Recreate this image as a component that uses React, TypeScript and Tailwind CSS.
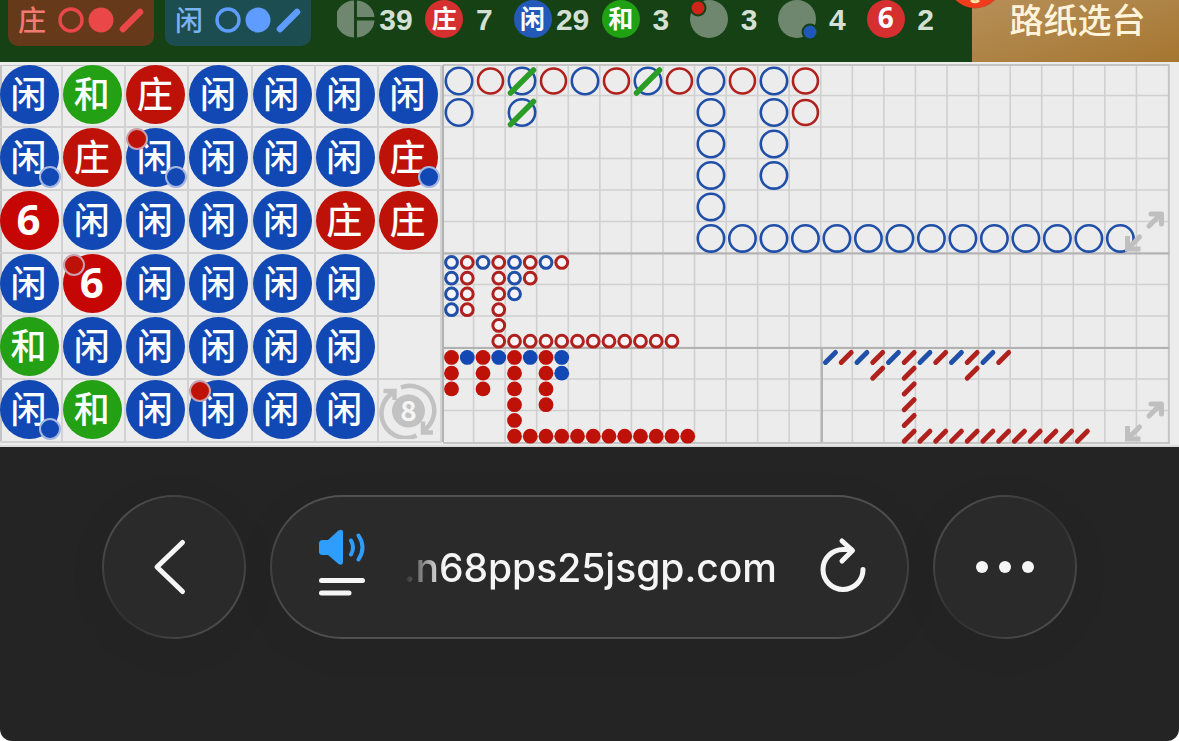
import type { ReactNode } from 'react';

const BLUE = '#1248b4';
const RED = '#be1108';
const LINE_BLUE = '#1f4fa8';
const LINE_RED = '#b0201c';

// B = 闲, R = 庄, T = 和, 6 = lucky six; "r" / "b" after it marks a pair dot
const beads = [
  ['B', 'T', 'R', 'B', 'B', 'B', 'B'],
  ['Bb', 'R', 'Brb', 'B', 'B', 'B', 'Rb'],
  ['6', 'B', 'B', 'B', 'B', 'R', 'R'],
  ['B', '6r', 'B', 'B', 'B', 'B', ''],
  ['T', 'B', 'B', 'B', 'B', 'B', ''],
  ['Bb', 'T', 'B', 'Br', 'B', 'B', '?'],
];

// G is a blue result crossed by a tie
const bigRoad = [
  'BRGRBRGRBRBR',
  'B.G.....B.BR',
  '........B.B',
  '........B.B',
  '........B',
  '........BBBBBBBBBBBBBB',
];

const bigEyeRoad = ['BRBRBRBR', 'BR.RBR', 'BR.RB', 'BR.R', '...R', '...RRRRRRRRRRRR'];

const smallRoad = ['RBRBRBRB', 'R.R.R.RB', 'R.R.R.R', '....R.R', '....R', '....RRRRRRRRRRRR'];

const cockroachRoad = ['BRBRBRBRBRBR', '...R.R...R', '.....R', '.....R', '.....R', '.....RRRRRRRRRRRR'];

const beadStyles: Record<string, { label: string; className: string }> = {
  B: { label: '闲', className: 'bg-[#1248b4] pb-1.5 text-[36px] font-medium' },
  R: { label: '庄', className: 'bg-[#be1108] pb-1.5 text-[36px] font-medium' },
  T: { label: '和', className: 'bg-[#23a014] pb-1.5 text-[36px] font-medium' },
  '6': { label: '6', className: 'bg-[#c60505] pb-1 text-[42px] font-bold font-["Open_Sans",sans-serif]' },
};

const Bead = ({ value }: { value: string }) => {
  const style = beadStyles[value[0]];
  return (
    <div
      className={`relative flex h-[59px] w-[59px] items-center justify-center rounded-full leading-none text-white ${style.className}`}
    >
      <span className="pr-0.5">{style.label}</span>
      {value.includes('r') && (
        <span className="absolute left-0 top-0 h-[22px] w-[22px] rounded-full border-2 border-[#c9a0ab] bg-[#be1108]" />
      )}
      {value.includes('b') && (
        <span className="absolute -bottom-px -right-0.5 h-[22px] w-[22px] rounded-full border-2 border-[#a5b6e2] bg-[#1248b4]" />
      )}
    </div>
  );
};

const NextRound = () => (
  <button type="button" aria-label="8" className="h-[59px] w-[59px]">
    <svg viewBox="0 0 59 59" className="h-full w-full" fill="none" stroke="#c2c2c2" strokeWidth="4.5">
      <path d="M22 7.500A24.500 24.500 0 0 1 44 51M44 41.500V52.500H54" />
      <path d="M37.500 55.500A24.500 24.500 0 0 1 15 12M4.500 11H15.500V20" />
      <circle cx="29.500" cy="31" r="16.500" fill="#c2c2c2" stroke="none" />
      <text
        x="29.500"
        y="41"
        textAnchor="middle"
        fill="#f5f5f5"
        stroke="none"
        className='text-[28px] font-bold font-["Noto_Sans_CJK_SC",sans-serif]'
      >
        8
      </text>
    </svg>
  </button>
);

const BeadPlate = () => (
  <div className='mt-[3px] grid w-3/8 shrink-0 auto-rows-[63px] grid-cols-7 content-start self-start font-["Noto_Sans_CJK_SC",sans-serif] shadow-[inset_2px_1px_0_#c4c4c4]'>
    {beads.flat().map((value, i) => (
      <div key={i} className="border-b-2 border-r-2 border-[#d2d2d2]">
        {value === '?' && <NextRound />}
        {value !== '' && value !== '?' && <Bead value={value} />}
      </div>
    ))}
  </div>
);

interface RoadProps {
  rows: string[];
  x: number;
  y: number;
  step: number;
  draw: (value: string) => ReactNode;
}

const Road = ({ rows, x, y, step, draw }: RoadProps) => (
  <g>
    {rows.map((row, r) =>
      row.split('').map((value, c) =>
        value === '.' ? null : (
          <g key={`${r}-${c}`} transform={`translate(${x + c * step} ${y + r * step})`}>
            {draw(value)}
          </g>
        )
      )
    )}
  </g>
);

const STEP = 31.5;

const RoadMap = () => (
  <svg viewBox="0 0 737 384" className="block h-auto w-full" fill="none">
    <g stroke="#d0d0d0" strokeWidth="1.6">
      {Array.from({ length: 22 }, (_, i) => (
        <path key={i} d={`M${(i + 1) * 31.57} 3V380`} />
      ))}
      {Array.from({ length: 11 }, (_, i) => (
        <path key={i} d={`M1 ${2 + (i + 1) * 31.5}H727`} />
      ))}
    </g>
    <path d="M1 3H727V381H1" stroke="#c4c4c4" strokeWidth="2" />
    <path d="M1 3V380M1 191.500H727M1 286H727M380 286V380" stroke="#b2b2b2" strokeWidth="2" />

    <Road
      rows={bigRoad}
      x={17}
      y={19}
      step={STEP}
      draw={(v) => (
        <>
          <circle r={v === 'R' ? 12.5 : 13.2} stroke={v === 'R' ? LINE_RED : LINE_BLUE} strokeWidth="2.6" />
          {v === 'G' && <path d="M-11.500 12L11.500 -11" stroke="#2a9d26" strokeWidth="5.500" strokeLinecap="round" />}
        </>
      )}
    />
    <Road
      rows={bigEyeRoad}
      x={9.5}
      y={200.500}
      step={STEP / 2}
      draw={(v) => <circle r="5.900" fill="#f7f4f8" stroke={v === 'R' ? LINE_RED : LINE_BLUE} strokeWidth="3" />}
    />
    <Road
      rows={smallRoad}
      x={9.5}
      y={295.500}
      step={STEP / 2}
      draw={(v) => <circle r="7.400" fill={v === 'R' ? RED : BLUE} />}
    />
    <Road
      rows={cockroachRoad}
      x={388.500}
      y={295.500}
      step={STEP / 2}
      draw={(v) => (
        <path d="M-5 5L5 -5" stroke={v === 'R' ? LINE_RED : LINE_BLUE} strokeWidth="4.900" strokeLinecap="round" />
      )}
    />
  </svg>
);

const ExpandIcon = () => (
  <svg viewBox="0 0 42 44" className="h-[44px] w-[42px]" fill="none" stroke="#bfbfbf" strokeWidth="5">
    <path d="M25 17L36 6" strokeLinecap="round" />
    <path d="M27 5H37.500V15" strokeLinecap="round" strokeLinejoin="round" />
    <path d="M15.500 28L5 38.500" strokeLinecap="round" />
    <path d="M3.500 27V40H16.500" />
  </svg>
);

const RoadKey = ({ label, className, children }: { label: string; className: string; children: ReactNode }) => (
  <button
    type="button"
    className={`flex h-[46px] w-[146px] items-center rounded-b-[10px] pb-1.5 pl-2.5 font-["Noto_Sans_CJK_SC",sans-serif] text-[28px] font-medium leading-none ${className}`}
  >
    <span className="pb-0.5">{label}</span>
    {children}
  </button>
);

const KeyMarks = () => (
  <svg viewBox="0 0 86 26" className="ml-3 h-[26px] w-[86px]" fill="none" stroke="currentColor">
    <circle cx="13" cy="13" r="11" strokeWidth="3.400" />
    <circle cx="43" cy="13" r="12.500" fill="currentColor" stroke="none" />
    <path d="M65 22L82 5" strokeWidth="6.600" strokeLinecap="round" />
  </svg>
);

const Stat = ({ icon, count }: { icon: ReactNode; count: number }) => (
  <div className="flex items-center">
    {icon}
    <span className='w-[42px] pt-0.5 text-center font-["Liberation_Sans",sans-serif] text-[30px] font-bold leading-none text-[#d3e0d3]'>
      {count}
    </span>
  </div>
);

const StatDisc = ({ label, className }: { label: string; className: string }) => (
  <span
    className={`flex h-[38px] w-[38px] shrink-0 items-center justify-center rounded-full pb-1 leading-none text-white ${className}`}
  >
    {label}
  </span>
);

const PairDisc = ({ cx, cy, color }: { cx: number; cy: number; color: string }) => (
  <svg viewBox="0 0 38 38" className="h-[38px] w-[38px] shrink-0 overflow-visible">
    <circle cx="19" cy="19" r="19" fill="#70876f" />
    <circle cx={cx} cy={cy} r="7.500" fill={color} stroke="#154114" strokeWidth="2" />
  </svg>
);

const TotalIcon = () => (
  <svg viewBox="0 0 38 38" className="h-[38px] w-[38px] shrink-0" fill="#70876f">
    <path d="M17 .500A18.500 18.500 0 0 0 17 37.500Z" />
    <path d="M20 .500A18.500 18.500 0 0 1 37.500 17H20Z" />
    <path d="M20 20.500H37.500A18.500 18.500 0 0 1 20 37.500Z" />
  </svg>
);

const StatsBar = () => (
  <header className="flex h-[62px] overflow-hidden bg-[#154114]">
    <div className="flex flex-1 items-start pl-2 pr-[17px]">
      <RoadKey label="庄" className="bg-[#66391b] text-[#f27a70]">
        <span className="text-[#ea4848]"><KeyMarks /></span>
      </RoadKey>
      <div className="w-[11px]" />
      <RoadKey label="闲" className="bg-[#1c4d50] text-[#7ab2f4]">
        <span className="text-[#5e9cff]"><KeyMarks /></span>
      </RoadKey>
      <div className='ml-[26px] grid h-[34px] flex-1 grid-cols-7 items-center font-["Noto_Sans_CJK_SC",sans-serif]'>
        <Stat icon={<TotalIcon />} count={39} />
        <Stat icon={<StatDisc label="庄" className="bg-[#d62f30] text-[25px] font-bold" />} count={7} />
        <Stat icon={<StatDisc label="闲" className="bg-[#2359b8] text-[25px] font-bold" />} count={29} />
        <Stat icon={<StatDisc label="和" className="bg-[#20a013] text-[25px] font-bold" />} count={3} />
        <Stat icon={<PairDisc cx={8} cy={8} color="#cf2417" />} count={3} />
        <Stat icon={<PairDisc cx={32} cy={32} color="#1f57bb" />} count={4} />
        <Stat
          icon={<StatDisc label="6" className='bg-[#d62f30] font-["Open_Sans",sans-serif] text-[28px] font-bold' />}
          count={2}
        />
      </div>
    </div>
    <button
      type="button"
      className='relative w-[207px] bg-linear-to-br from-[#b68f58] to-[#a5762f] pb-6 pl-1 text-center font-["Noto_Sans_CJK_SC",sans-serif] text-[34px] font-medium leading-none text-[#fff4da]'
    >
      路纸选台
      <svg viewBox="0 0 60 60" className="absolute -left-[27px] -top-[50px] h-[60px] w-[60px] overflow-visible">
        <circle cx="30" cy="30.500" r="28" fill="#7a2a12" opacity=".5" />
        <circle cx="30" cy="30.500" r="27.500" fill="#f03c1c" />
        <path d="M26 50Q30 53.500 34 50" fill="none" stroke="#ffe0a0" strokeWidth="3" />
      </svg>
    </button>
  </header>
);

const glass = 'h-[144px] rounded-full p-0.5 shadow-[0_8px_44px_rgba(0,0,0,0.05)]';
const glassInner = 'flex h-full w-full items-center rounded-full bg-[#2a2a2a]';

const BrowserBar = () => (
  <nav className="flex h-[294px] items-start gap-6 rounded-b-[12px] bg-[#242424] px-[102px] pt-12">
    <button type="button" aria-label="Back" className={`w-[144px] shrink-0 bg-linear-to-br from-[#585858] via-[#303030] to-[#585858] ${glass}`}>
      <span className={`justify-center ${glassInner}`}>
        <svg viewBox="0 0 40 60" className="mr-2 h-[60px] w-[40px]" fill="none" stroke="#f5f5f5" strokeWidth="5">
          <path d="M32.500 5.500L7 30L32.500 54.500" strokeLinecap="round" strokeLinejoin="round" />
        </svg>
      </span>
    </button>

    <div className={`min-w-0 flex-1 bg-linear-to-b from-[#525254] via-[#404040] to-[#505050] ${glass}`}>
      <div className={`pl-[46px] pr-10 ${glassInner}`}>
        <button type="button" aria-label="Page menu" className="mb-1.5 shrink-0">
          <svg viewBox="0 0 50 72" className="h-[72px] w-[50px]" fill="none" strokeLinecap="round">
            <path
              d="M4.500 12H10L20.500 2.500Q25 .500 25 4V34Q25 38 20.500 36L10 27H4.500Q1 27 1 23.500V15.500Q1 12 4.500 12Z"
              fill="#2e9dfb"
            />
            <path d="M33 12.500Q37 19.500 33 26.500M40.500 7.500Q48.500 19.500 40.500 31.500" stroke="#2e9dfb" strokeWidth="4" />
            <path d="M3.500 52.500H44.500M3.500 65H31" stroke="#f5f5f5" strokeWidth="5" />
          </svg>
        </button>
        <input
          type="text"
          aria-label="Address"
          defaultValue=".n68pps25jsgp.com"
          className='ml-6 mr-10 min-w-0 flex-1 bg-transparent pt-0.5 text-right font-["Inter",sans-serif] text-[39px] font-medium leading-[52px] text-[#f5f5f5] outline-none mask-[linear-gradient(to_right,transparent_12px,black_52px)]'
        />
        <button type="button" aria-label="Reload" className="shrink-0">
          <svg viewBox="0 0 50 60" className="h-[60px] w-[50px]" fill="none" stroke="#f5f5f5" strokeWidth="5">
            <path d="M46 32.500A20 20 0 1 1 26 12.500H34" strokeLinecap="round" />
            <path d="M25 4L35.500 13.500L25 24" strokeLinecap="round" strokeLinejoin="round" />
          </svg>
        </button>
      </div>
    </div>

    <button type="button" aria-label="More" className={`w-[144px] shrink-0 bg-linear-to-br from-[#585858] via-[#303030] to-[#585858] ${glass}`}>
      <span className={`justify-center gap-[11px] ${glassInner}`}>
        <span className="h-3 w-3 rounded-full bg-[#f5f5f5]" />
        <span className="h-3 w-3 rounded-full bg-[#f5f5f5]" />
        <span className="h-3 w-3 rounded-full bg-[#f5f5f5]" />
      </span>
    </button>
  </nav>
);

const App = () => {
  return (
    <div className="bg-white">
      <StatsBar />
      <main className="flex h-[385px] overflow-hidden border-b-2 border-[#d9dcd9] bg-[#ececec]">
        <BeadPlate />
        <div className="relative flex-1">
          <RoadMap />
          <button type="button" aria-label="Expand big road" className="absolute right-[13px] top-[147px]">
            <ExpandIcon />
          </button>
          <button type="button" aria-label="Expand cockroach road" className="absolute right-[13px] top-[337px]">
            <ExpandIcon />
          </button>
        </div>
      </main>
      <BrowserBar />
    </div>
  );
};

export default App;
